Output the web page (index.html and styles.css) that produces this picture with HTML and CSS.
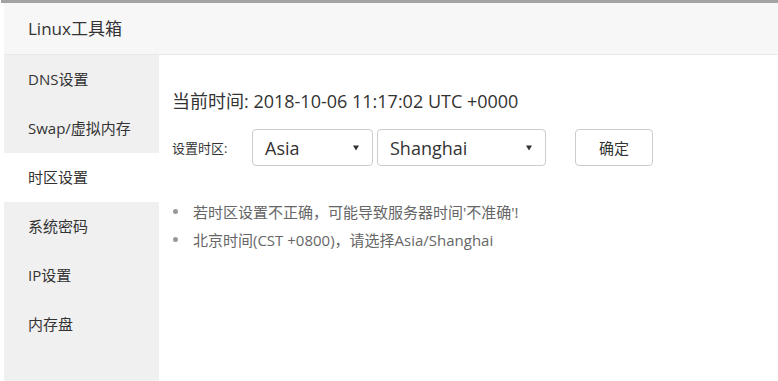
FILE: index.html
```html
<!DOCTYPE html>
<html lang="zh">
<head>
<meta charset="utf-8">
<title>Linux工具箱</title>
<link rel="stylesheet" href="styles.css">
</head>
<body>
<div class="app">
  <header class="header">Linux工具箱</header>
  <div class="body">
    <nav class="sidebar">
      <div class="nav-item">DNS设置</div>
      <div class="nav-item">Swap/虚拟内存</div>
      <div class="nav-item active">时区设置</div>
      <div class="nav-item">系统密码</div>
      <div class="nav-item">IP设置</div>
      <div class="nav-item">内存盘</div>
    </nav>
    <main class="main">
      <div class="now">当前时间: 2018-10-06 11:17:02 UTC +0000</div>
      <div class="form-row">
        <span class="label">设置时区:</span>
        <div class="select select-region"><span>Asia</span><svg class="arrow" width="6" height="6" viewBox="0 0 6 6"><path d="M0 0.5H6L3 5.5Z" fill="#333"/></svg></div>
        <div class="select select-city"><span>Shanghai</span><svg class="arrow" width="6" height="6" viewBox="0 0 6 6"><path d="M0 0.5H6L3 5.5Z" fill="#333"/></svg></div>
        <button class="btn">确定</button>
      </div>
      <ul class="tips">
        <li><span class="dot"></span><span>若时区设置不正确，可能导致服务器时间'不准确'!</span></li>
        <li><span class="dot"></span><span>北京时间(CST +0800)，请选择Asia/Shanghai</span></li>
      </ul>
    </main>
  </div>
</div>
</body>
</html>
```

FILE: styles.css
```css
html, body {
  margin: 0;
  padding: 0;
  background: #fff;
}
body {
  font-family: "Open Sans", "Noto Sans CJK SC", sans-serif;
  color: #333;
}
.app {
  margin-left: 1px;
  border-top: 3px solid #a3a3a3;
  padding-left: 3px;
  height: 378px;
  display: flex;
  flex-direction: column;
}
.header {
  height: 51px;
  line-height: 51px;
  background: #f7f7f7;
  border-bottom: 1px solid #e8e8e8;
  padding-left: 24px;
  font-size: 17px;
  color: #333;
}
.body {
  flex: 1;
  display: flex;
}
.sidebar {
  width: 155px;
  background: #f0f0f0;
  flex-shrink: 0;
}
.nav-item {
  height: 49px;
  line-height: 49px;
  padding-left: 24px;
  font-size: 15px;
  color: #333;
}
.nav-item.active {
  background: #fff;
}
.main {
  flex: 1;
  padding-left: 13px;
}
.now {
  margin-top: 33px;
  height: 26px;
  line-height: 26px;
  font-size: 18px;
  color: #333;
}
.form-row {
  margin-top: 15px;
  display: flex;
  align-items: center;
  height: 37px;
}
.label {
  width: 80px;
  font-size: 13px;
  color: #333;
}
.select {
  box-sizing: border-box;
  height: 37px;
  border: 1px solid #ccc;
  border-radius: 4px;
  display: flex;
  align-items: center;
  justify-content: space-between;
  padding: 0 13px 0 12px;
  font-size: 18px;
  color: #333;
}
.select-region {
  width: 121px;
}
.select-city {
  width: 169px;
  margin-left: 4px;
}
.arrow {
  display: block;
}
.btn {
  box-sizing: border-box;
  margin-left: 29px;
  width: 78px;
  height: 37px;
  border: 1px solid #ccc;
  border-radius: 4px;
  background: #fff;
  font-family: inherit;
  font-size: 15px;
  color: #333;
  padding: 0;
}
.tips {
  list-style: none;
  margin: 31px 0 0 0;
  padding: 0;
}
.tips li {
  display: flex;
  align-items: center;
  height: 28px;
  font-size: 15px;
  color: #666;
}
.dot {
  width: 5px;
  height: 5px;
  border-radius: 50%;
  background: #999;
  margin-left: 1px;
  margin-right: 15px;
}
```
